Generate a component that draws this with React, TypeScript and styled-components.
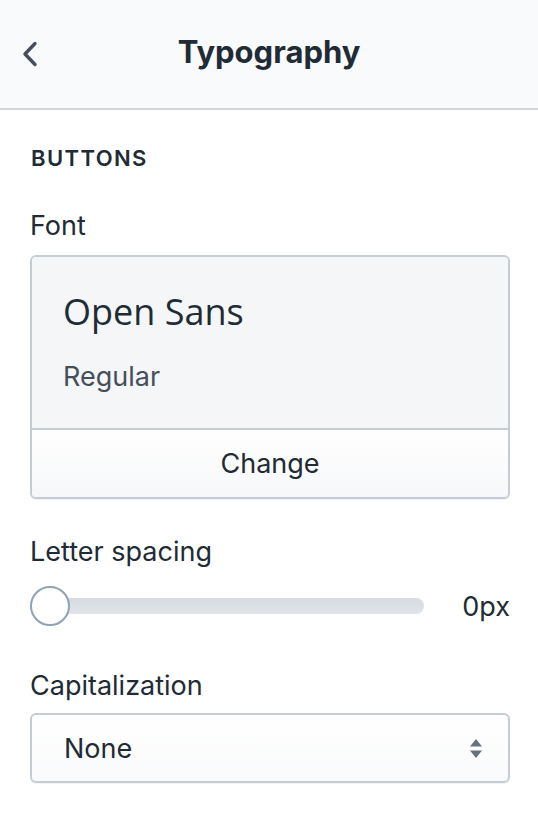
import styled, { createGlobalStyle } from 'styled-components'

const GlobalStyle = createGlobalStyle`
  html, body {
    margin: 0;
    padding: 0;
    background: #ffffff;
  }

  body {
    font-family: Inter, 'Liberation Sans', sans-serif;
    color: #212b36;
    -webkit-font-smoothing: antialiased;
  }
`

const Panel = styled.div`
  width: 538px;
  min-height: 820px;
  background: #ffffff;
`

const Header = styled.header`
  position: relative;
  height: 108px;
  display: flex;
  align-items: center;
  justify-content: center;
  background: #f9fafb;
  border-bottom: 2px solid #d4d7da;
`

const BackButton = styled.button`
  position: absolute;
  left: 14px;
  top: 36px;
  width: 32px;
  height: 36px;
  padding: 0;
  border: 0;
  background: none;
  display: flex;
  align-items: center;
  justify-content: center;
  cursor: pointer;
`

const Title = styled.h1`
  margin: 0 0 4px;
  font-size: 31px;
  font-weight: 700;
  line-height: 40px;
  color: #212b36;
`

const Body = styled.div`
  padding: 32px 28px 0 30px;
  display: flex;
  flex-direction: column;
`

const SectionTitle = styled.h2`
  margin: 0 0 0 1px;
  font-size: 22px;
  font-weight: 600;
  line-height: 32px;
  letter-spacing: 1.4px;
  text-transform: uppercase;
  color: #212b36;
`

const Label = styled.div<{ $top: number; $gap: number }>`
  margin-top: ${(p) => p.$top}px;
  margin-bottom: ${(p) => p.$gap}px;
  font-size: 27px;
  line-height: 36px;
  color: #212b36;
`

const Card = styled.div`
  border: 2px solid #c4cdd5;
  border-radius: 6px;
  overflow: hidden;
  box-shadow: 0 1px 0 rgba(22, 29, 37, 0.05);
`

const Preview = styled.div`
  background: #f4f6f8;
  padding: 33px 30px 33px 31px;
  border-bottom: 2px solid #c4cdd5;
`

const FontName = styled.div`
  font-family: 'Open Sans', sans-serif;
  font-size: 36px;
  line-height: 44px;
  color: #212b36;
`

const FontStyle = styled.div`
  margin-top: 25px;
  font-size: 27px;
  line-height: 36px;
  color: #454f5b;
`

const ChangeButton = styled.button`
  display: block;
  width: 100%;
  height: 67px;
  border: 0;
  background: linear-gradient(180deg, #ffffff, #f6f7f9);
  font-family: inherit;
  font-size: 27px;
  color: #212b36;
  cursor: pointer;
`

const SliderRow = styled.div`
  display: flex;
  align-items: center;
  height: 40px;
`

const Track = styled.div`
  position: relative;
  flex: 0 0 394px;
  height: 40px;
  display: flex;
  align-items: center;

  &::before {
    content: '';
    position: absolute;
    left: 19px;
    right: 0;
    height: 16px;
    border-radius: 8px;
    background: linear-gradient(180deg, #d6dbe1, #e1e5ea);
  }
`

const Thumb = styled.div`
  position: relative;
  width: 40px;
  height: 40px;
  box-sizing: border-box;
  border-radius: 50%;
  border: 2px solid #90a3b5;
  background: #ffffff;
`

const SliderValue = styled.div`
  margin-left: auto;
  font-size: 27px;
  color: #212b36;
`

const Select = styled.div`
  position: relative;
  height: 70px;
  box-sizing: border-box;
  border: 2px solid #c4cdd5;
  border-radius: 6px;
  background: linear-gradient(180deg, #ffffff, #f9fafb);
  box-shadow: 0 1px 0 rgba(22, 29, 37, 0.05);
  display: flex;
  align-items: center;
  padding: 0 26px 0 32px;
`

const SelectValue = styled.span`
  flex: 1;
  font-size: 27px;
  color: #212b36;
`

function ChevronLeft() {
  return (
    <svg width="16" height="26" viewBox="0 0 16 26" fill="none">
      <path d="M13 2.5 3 13l10 10.5" stroke="#454f5b" strokeWidth="3.4" strokeLinecap="round" strokeLinejoin="round" />
    </svg>
  )
}

function SelectArrows() {
  return (
    <svg width="12" height="19" viewBox="0 0 12 19">
      <path d="M6 0 12 7.5H0Z" fill="#637381" />
      <path d="M0 11.5h12L6 19Z" fill="#637381" />
    </svg>
  )
}

export default function App() {
  return (
    <>
      <GlobalStyle />
      <Panel>
        <Header>
          <BackButton aria-label="Back">
            <ChevronLeft />
          </BackButton>
          <Title>Typography</Title>
        </Header>
        <Body>
          <SectionTitle>Buttons</SectionTitle>
          <Label $top={34} $gap={11}>Font</Label>
          <Card>
            <Preview>
              <FontName>Open Sans</FontName>
              <FontStyle>Regular</FontStyle>
            </Preview>
            <ChangeButton>Change</ChangeButton>
          </Card>
          <Label $top={35} $gap={16}>Letter spacing</Label>
          <SliderRow>
            <Track>
              <Thumb />
            </Track>
            <SliderValue>0px</SliderValue>
          </SliderRow>
          <Label $top={42} $gap={9}>Capitalization</Label>
          <Select>
            <SelectValue>None</SelectValue>
            <SelectArrows />
          </Select>
        </Body>
      </Panel>
    </>
  )
}
